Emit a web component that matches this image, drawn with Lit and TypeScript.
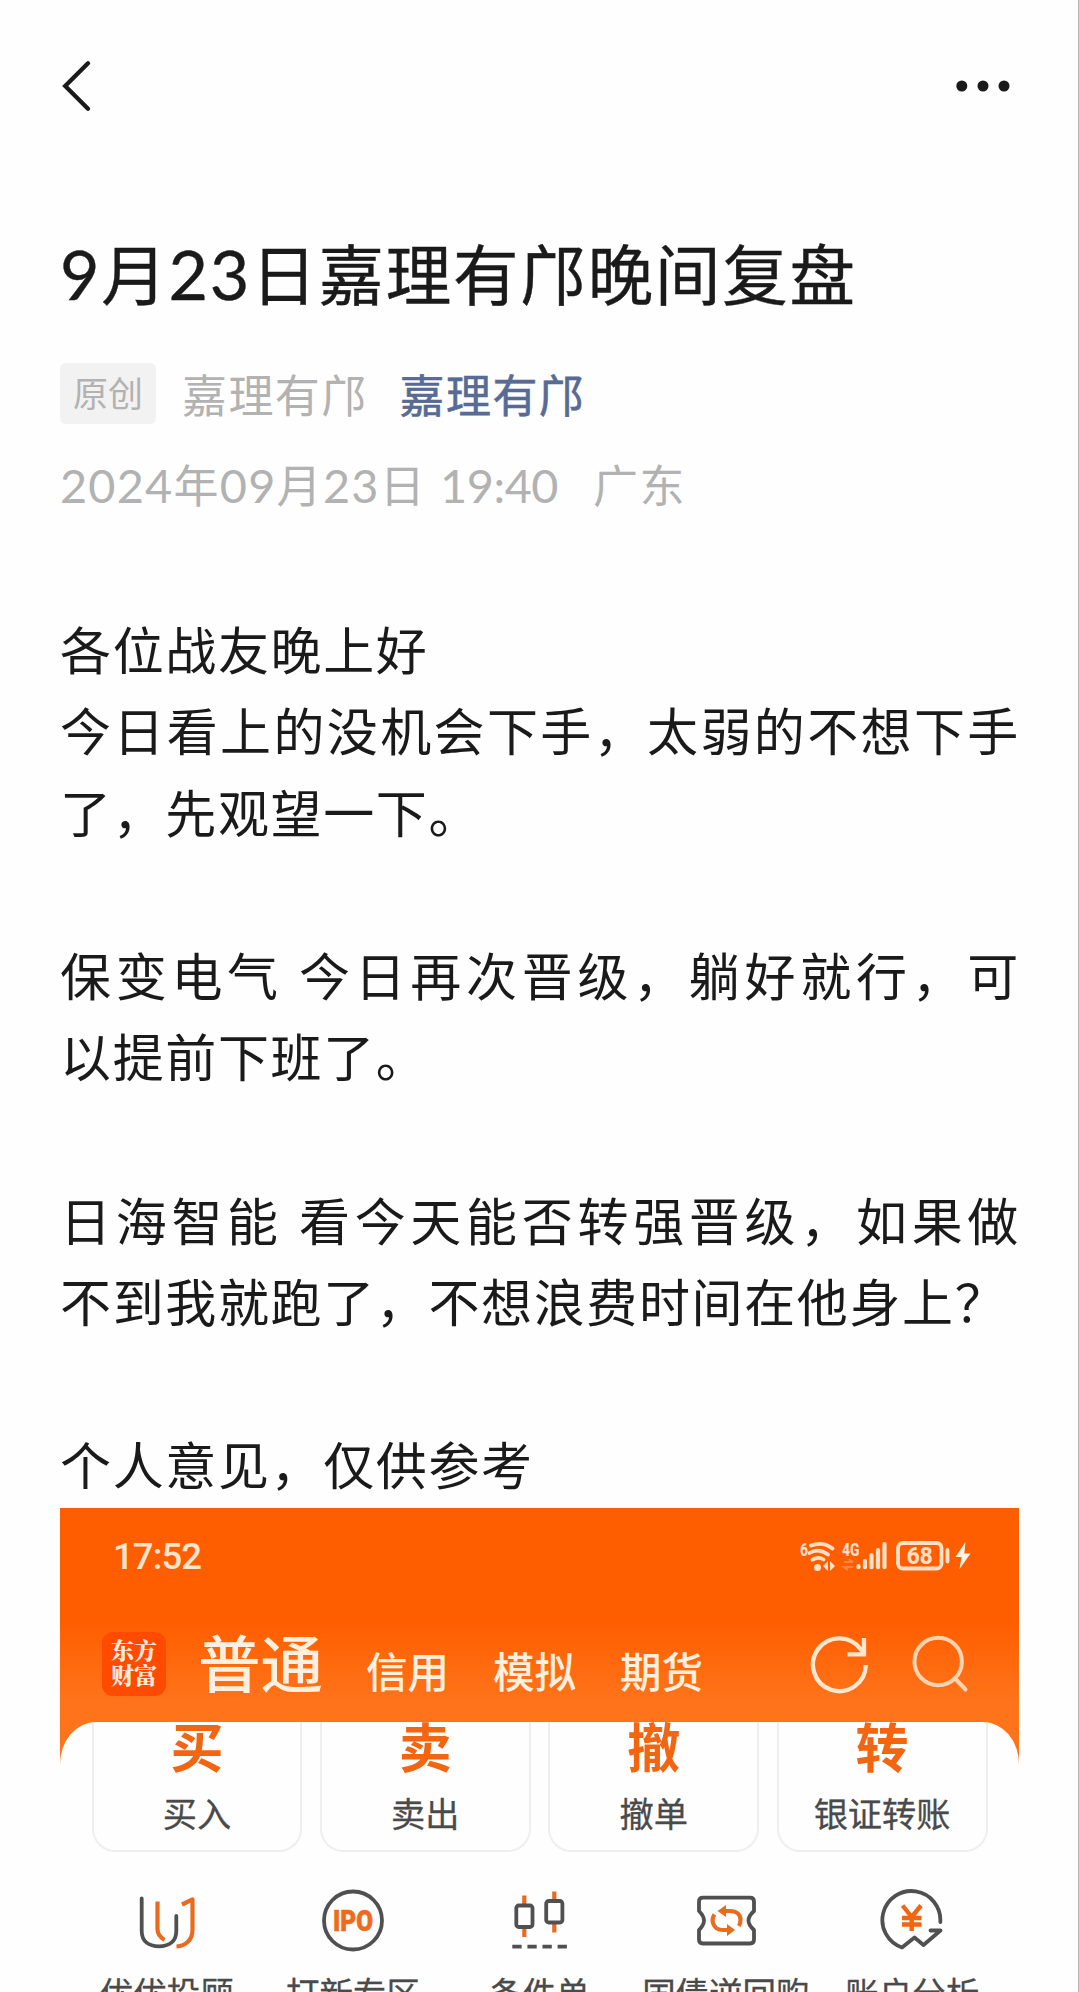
import { LitElement, html, svg, css } from "lit";
import { customElement } from "lit/decorators.js";

const LINES: { text: string; full?: boolean }[] = [
  { text: "各位战友晚上好" },
  { text: "今日看上的没机会下手，太弱的不想下手", full: true },
  { text: "了，先观望一下。" },
  { text: "" },
  { text: "保变电气 今日再次晋级，躺好就行，可", full: true },
  { text: "以提前下班了。" },
  { text: "" },
  { text: "日海智能 看今天能否转强晋级，如果做", full: true },
  { text: "不到我就跑了，不想浪费时间在他身上？" },
  { text: "" },
  { text: "个人意见，仅供参考" },
];

const CARDS = [
  ["买", "买入"],
  ["卖", "卖出"],
  ["撤", "撤单"],
  ["转", "银证转账"],
];

const SHORTCUTS = [
  {
    label: "优优投顾",
    icon: svg`
      <path class="g" d="M6.7 9.500V42C6.700 52.500 14 57.300 24 57.300S41.300 52.500 41.300 42V27"/>
      <path class="o" d="M22.500 12.500V40C22.500 45 25.500 48.500 29.500 51"/>
      <path class="o" d="M47 15.500L57.500 10.500V41C57.500 51 50.500 57 41.500 57.500"/>`,
  },
  {
    label: "打新专区",
    icon: svg`
      <circle class="g" cx="32" cy="31.500" r="29"/>
      <text class="ipo" x="32" y="41.700" text-anchor="middle" textLength="40" lengthAdjust="spacingAndGlyphs">IPO</text>`,
  },
  {
    label: "条件单",
    icon: svg`
      <path class="o" d="M17.300 6.500V15M17.300 39V48M47.300 2.500V10M47.300 35V43.500"/>
      <rect class="g" x="9.300" y="16.500" width="16.200" height="21.500" rx="2.500"/>
      <rect class="g" x="39.200" y="12" width="16.200" height="21.500" rx="2.500"/>
      <path class="g dash" d="M5.300 57.700H60"/>`,
  },
  {
    label: "国债逆回购",
    icon: svg`
      <path class="g" d="M9 8.700H56Q60 8.700 60 12.700V22Q54.500 27 54.500 31.500T60 41V50.500Q60 54.500 56 54.500H9Q5 54.500 5 50.500V41Q10 36 10 31.500T5 22V12.700Q5 8.700 9 8.700Z"/>
      <path class="o" d="M30 22H36C43 22 46.500 26 46.500 31C46.500 33.500 46 35 45 37M20.500 25.500C18.500 28 18.300 31 19 34C20.500 39 24 41 29 41H34"/>
      <path class="of" d="M23.500 22L32 16V28ZM41 41L33 35V47Z"/>`,
  },
  {
    label: "账户分析",
    icon: svg`
      <path class="g" d="M60.300 33A29 29 0 1 0 22 58.500L34.500 48.500L43.500 56L60.500 41.500H50.500"/>
      <path class="o yen" d="M22.500 16.500L31.700 28L41 16.500M22 29H41.500M22 35.500H41.500M31.700 27V42"/>`,
  },
];

@customElement("article-nav")
class ArticleNav extends LitElement {
  static styles = css`
    :host { display: flex; justify-content: space-between; align-items: center; height: 172px; padding: 0 67px 0 59px; }
    svg { display: block; }
  `;
  render() {
    return html`
      <svg width="36" height="60" viewBox="0 0 36 60" fill="none" stroke="#1a1a1a" stroke-width="4.300" stroke-linecap="round">
        <path d="M29 7.200L6.200 30L29 52.800"/>
      </svg>
      <svg width="56" height="14" viewBox="0 0 56 14" fill="#1a1a1a">
        <circle cx="6.800" cy="7" r="5.500"/><circle cx="28" cy="7" r="5.500"/><circle cx="49" cy="7" r="5.500"/>
      </svg>`;
  }
}

@customElement("status-icons")
class StatusIcons extends LitElement {
  static styles = css`
    :host { display: block; }
    svg { display: block; }
    text { font-family: Roboto, "Liberation Sans", sans-serif; font-weight: 800; fill: #ffdfc6; }
    .s { fill: none; stroke: #ffdfc6; stroke-width: 3.800; stroke-linecap: round; }
    .bars { stroke-width: 4.200; }
    .f { fill: #ffdfc6; }
  `;
  render() {
    return html`
      <svg width="174" height="34" viewBox="0 0 174 34">
        <text x="0" y="16.500" font-size="18" textLength="8" lengthAdjust="spacingAndGlyphs">6</text>
        <path class="s" d="M11 6.500Q23 2 32.500 9.500M9.500 14Q18.500 8.500 28 15.500M12.500 20.800Q18 17 23.500 20.500"/>
        <circle class="f" cx="17.500" cy="28.500" r="3.500"/>
        <path class="f" d="M23 27L28 22V32ZM35 27L30 22V32Z"/>
        <text x="42" y="17" font-size="19" textLength="17.500" lengthAdjust="spacingAndGlyphs">4G</text>
        <path d="M44 23H53M49 20L53 23M53 28H44L48 31" stroke="#ff8542" stroke-width="2" fill="none"/>
        <path class="s bars" d="M58.500 27.200V28.200M65 22V28.200M71.500 16V28.200M78 11V28.200M84.500 5V28.200"/>
        <rect class="s" x="98" y="4" width="43.500" height="25.500" rx="5"/>
        <path class="s" d="M147.500 11V22.500"/>
        <text x="119.800" y="24.900" font-size="23" text-anchor="middle" textLength="26" lengthAdjust="spacingAndGlyphs">68</text>
        <path fill="#fff2e6" d="M165.500 3L155.500 18H161.500L159.500 30L170.500 14.500H164.300Z"/>
      </svg>`;
  }
}

@customElement("trade-screen")
class TradeScreen extends LitElement {
  static styles = css`
    :host { display: block; width: 959px; height: 484px; overflow: hidden;
      background: linear-gradient(#ff5e00 0 114px, #ff731a 192px 100%); color: #ffefdf; }
    .status { display: flex; justify-content: space-between; align-items: center; height: 96px; padding: 0 45px 0 53px; box-sizing: border-box; }
    .time { font: 500 36.500px/40px Roboto, sans-serif; color: #ffe3cb; letter-spacing: -0.900px; padding-top: 2px; }
    .bar { display: flex; align-items: center; height: 117.500px; padding: 0 48px 0 42px; box-sizing: border-box; }
    .logo { display: flex; flex-direction: column; align-items: center; justify-content: center; width: 64px; height: 64px;
      border-radius: 11px; background: #ff4b00; font: 900 23px/25px "Noto Serif CJK SC", "Noto Sans CJK SC", serif; color: #ffe9dc; margin-top: 2px; padding-bottom: 3px; box-sizing: border-box; }
    .tabs { display: flex; align-items: baseline; margin-left: 32px; margin-top: 5px; white-space: nowrap; }
    .tab { font-size: 41.500px; line-height: 80px; margin-right: 44px; font-weight: 500; }
    .tab.on { font-size: 62.500px; margin-right: 43px; }
    .tools { display: flex; gap: 41px; margin-left: auto; margin-top: 2px; }
    .tools svg { display: block; }
    .sheet { background: #fefefe; border-radius: 36px 36px 0 0 / 42px 42px 0 0; height: 271px; overflow: hidden; color: #4a4a4a; }
    .cards { display: flex; gap: 17.500px; padding: 0 31.500px; }
    .card { flex: 1; height: 130px; box-sizing: border-box; border: 2px solid #eeeeee; border-top: 0; border-radius: 0 0 23px 23px;
      display: flex; flex-direction: column; align-items: center; }
    .big { font-size: 53px; font-weight: 700; line-height: 60px; margin-top: -6.500px; color: #f26511; }
    .name { font-size: 34.200px; line-height: 44px; margin-top: 14.500px; -webkit-text-stroke: 0.300px #4a4a4a; }
    .grid { display: grid; grid-template-columns: repeat(5, 186.400px); justify-content: center; margin-top: 37px; }
    .item { display: flex; flex-direction: column; align-items: center; white-space: nowrap; font-size: 33.500px; line-height: 44px; -webkit-text-stroke: 0.300px #4a4a4a; }
    .item svg { display: block; margin-bottom: 17px; -webkit-text-stroke: 0; }
    .g { fill: none; stroke: #505050; stroke-width: 3.800; stroke-linejoin: round; stroke-linecap: round; }
    .dash { stroke-linecap: butt; stroke-dasharray: 9.300px 5.800px; }
    .o { fill: none; stroke: #ea6a20; stroke-width: 4.200; stroke-linejoin: round; stroke-linecap: butt; }
    .yen { stroke: #f26511; stroke-width: 4.400; }
    .of { fill: #ea6a20; }
    .ipo { font: 900 29px Roboto, sans-serif; fill: #ee6a1c; stroke: #ee6a1c; stroke-width: 0.600px; }
  `;
  render() {
    return html`
      <div class="status"><span class="time">17:52</span><status-icons></status-icons></div>
      <div class="bar">
        <div class="logo"><span>东方</span><span>财富</span></div>
        <div class="tabs">
          <span class="tab on">普通</span><span class="tab">信用</span><span class="tab">模拟</span><span class="tab">期货</span>
        </div>
        <div class="tools">
          <svg width="60" height="60" viewBox="0 0 60 60" fill="none" stroke="#ffe6d0" stroke-width="4.300">
            <path d="M55.800 31A26.400 26.400 0 1 1 51 15.500L54 20M37.500 20.300H54V4"/>
          </svg>
          <svg width="60" height="60" viewBox="0 0 60 60" fill="none" stroke="#ffd3b0" stroke-width="4" stroke-linecap="round">
            <circle cx="27.200" cy="27.500" r="23.700"/><path d="M44 44.500L54.500 55.500"/>
          </svg>
        </div>
      </div>
      <div class="sheet">
        <div class="cards">
          ${CARDS.map(([big, name]) => html`<div class="card"><span class="big">${big}</span><span class="name">${name}</span></div>`)}
        </div>
        <div class="grid">
          ${SHORTCUTS.map((s) => html`<div class="item"><svg width="64" height="64" viewBox="0 0 64 64">${s.icon}</svg><span>${s.label}</span></div>`)}
        </div>
      </div>`;
  }
}

@customElement("app-root")
class AppRoot extends LitElement {
  static styles = css`
    :host { display: block; width: 1079px; height: 1992px; box-sizing: border-box; overflow: hidden;
      border-right: 1px solid #b4b4b4; background: #fefefe; color: #1a1a1a;
      font-family: "Noto Sans CJK SC", sans-serif; }
    .content { padding: 0 58px 0 60px; }
    .num { font-family: Lato, sans-serif; font-size: 1.040em; letter-spacing: 0.026em; }
    .title { margin: 0; padding-top: 55px; font-size: 65.500px; line-height: 90px; font-weight: 400; letter-spacing: 1.800px; white-space: nowrap; -webkit-text-stroke: 0.400px #1a1a1a; }
    .meta { display: flex; align-items: center; height: 62px; margin-top: 43.500px; font-size: 45px; line-height: 62px; letter-spacing: 1.400px; white-space: nowrap; }
    .tag { width: 96px; height: 61px; line-height: 57px; border-radius: 6px; background: #f2f2f2; color: #b2b2b2; font-size: 35px; letter-spacing: 0; text-align: center; }
    .author { margin-left: 26px; color: #b2b2b2; }
    .account { margin-left: 32px; color: #576b95; -webkit-text-stroke: 0.600px #576b95; }
    .date { display: flex; align-items: baseline; margin-top: 28px; color: #b2b2b2; font-size: 45px; line-height: 62px; letter-spacing: 1.400px; white-space: pre; }
    .clock { margin-left: 14px; letter-spacing: -0.010em; }
    .place { margin-left: 35px; }
    .body { margin-top: 92px; font-size: 51px; line-height: 81.600px; letter-spacing: 1.632px; }
    .line { height: 81.600px; white-space: nowrap; }
    .full { text-align: justify; text-align-last: justify; white-space: normal; }
    trade-screen { margin-top: 3px; }
  `;
  render() {
    const n = (t: string) => html`<span class="num">${t}</span>`;
    return html`
      <article-nav></article-nav>
      <div class="content">
        <h1 class="title">${n("9")}月${n("23")}日嘉理有邝晚间复盘</h1>
        <div class="meta"><span class="tag">原创</span><span class="author">嘉理有邝</span><span class="account">嘉理有邝</span></div>
        <div class="date"><span>${n("2024")}年${n("09")}月${n("23")}日</span><span class="num clock">19:40</span><span class="place">广东</span></div>
        <div class="body">${LINES.map((l) => html`<div class="line ${l.full ? "full" : ""}">${l.text}</div>`)}</div>
        <trade-screen></trade-screen>
      </div>`;
  }
}
